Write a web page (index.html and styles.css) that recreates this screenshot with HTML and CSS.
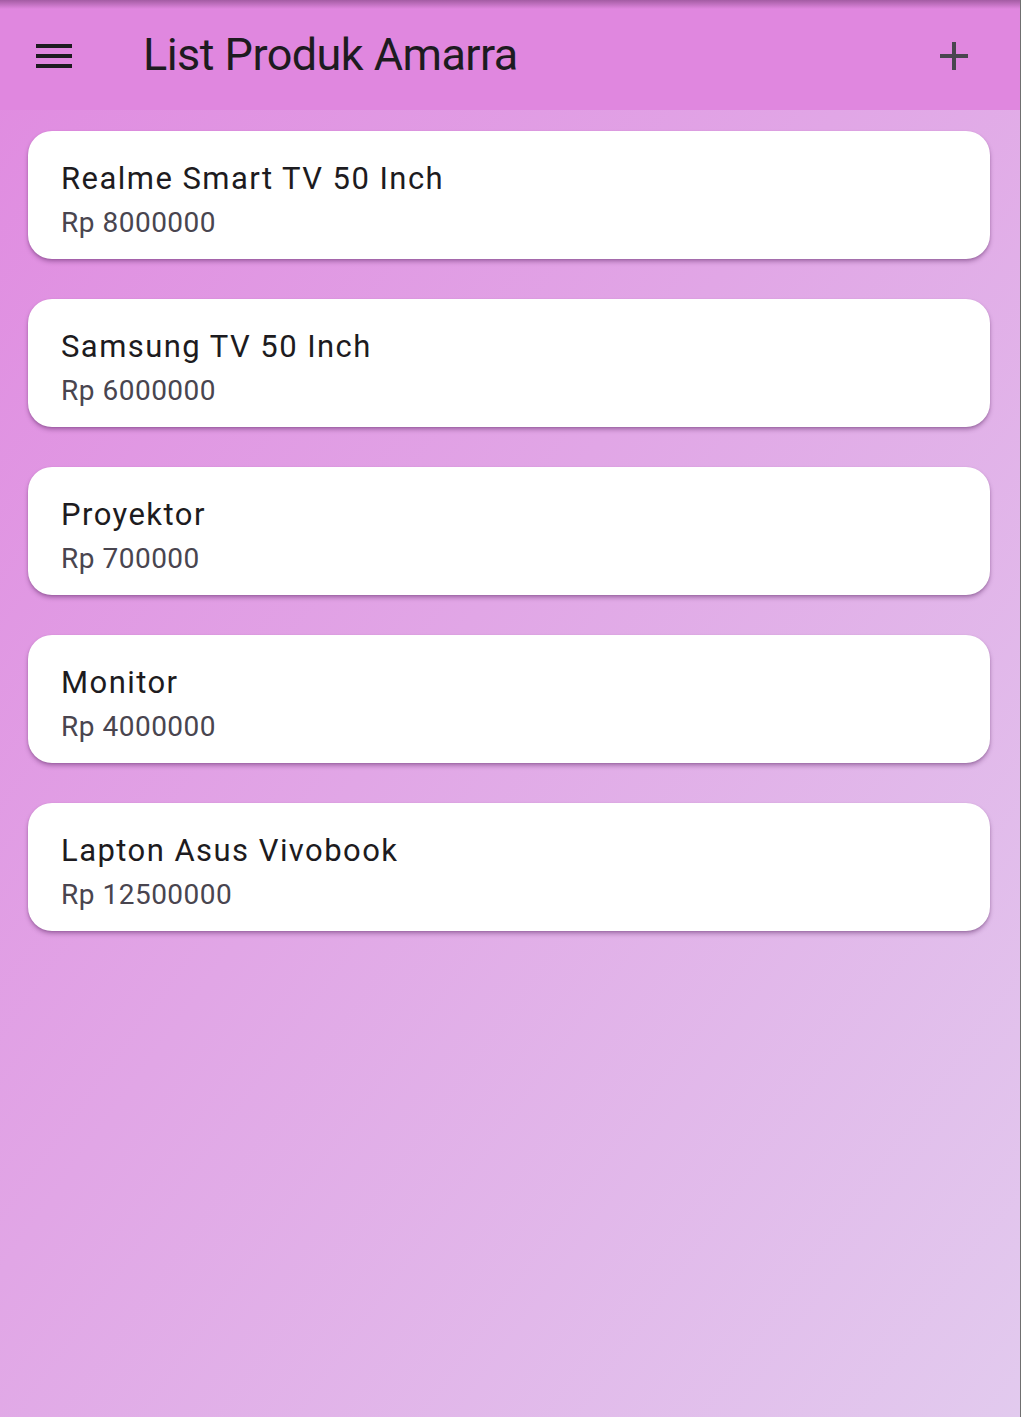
FILE: index.html
```html
<!DOCTYPE html>
<html lang="id">
<head>
<meta charset="utf-8">
<title>List Produk Amarra</title>
<link rel="stylesheet" href="styles.css">
</head>
<body>
<div class="screen">
  <header class="appbar">
    <button class="icon-btn menu" aria-label="menu">
      <svg viewBox="0 0 24 24" width="48" height="48"><path d="M3 18h18v-2H3v2zm0-5h18v-2H3v2zm0-7v2h18V6H3z" fill="currentColor"/></svg>
    </button>
    <h1 class="title">List Produk Amarra</h1>
    <button class="icon-btn add" aria-label="tambah">
      <svg viewBox="0 0 24 24" width="48" height="48"><path d="M19 13h-6v6h-2v-6H5v-2h6V5h2v6h6v2z" fill="currentColor"/></svg>
    </button>
  </header>
  <main class="list">
    <div class="card"><div class="name">Realme Smart TV 50 Inch</div><div class="price">Rp 8000000</div></div>
    <div class="card"><div class="name">Samsung TV 50 Inch</div><div class="price">Rp 6000000</div></div>
    <div class="card"><div class="name">Proyektor</div><div class="price">Rp 700000</div></div>
    <div class="card"><div class="name">Monitor</div><div class="price">Rp 4000000</div></div>
    <div class="card"><div class="name">Lapton Asus Vivobook</div><div class="price">Rp 12500000</div></div>
  </main>
</div>
</body>
</html>
```

FILE: styles.css
```css
html, body {
  margin: 0;
  padding: 0;
  height: 100%;
}
body {
  font-family: Roboto, "Noto Sans", sans-serif;
}
.screen {
  position: relative;
  height: 1417px;
  box-sizing: border-box;
  border-right: 1px solid #6f6f6f;
  background: linear-gradient(to bottom right, #e08ae0 0%, #e1a6e6 45%, #e2caee 100%);
  display: flex;
  flex-direction: column;
}
.screen::before {
  content: "";
  position: absolute;
  left: 0; right: 0; top: 0;
  height: 9px;
  background: linear-gradient(to bottom, rgba(90, 40, 90, 0.45), rgba(90, 40, 90, 0));
  pointer-events: none;
}
.appbar {
  height: 110px;
  flex: none;
  background: #e087df;
  display: flex;
  align-items: center;
  padding: 0 42px 0 30px;
  box-sizing: border-box;
}
.icon-btn {
  border: 0;
  background: none;
  padding: 0;
  width: 48px;
  height: 48px;
  display: flex;
  margin-top: 2px;
}
.menu { color: #1d1b20; }
.add { color: #49454f; }
.title {
  flex: 1;
  margin: 0 0 0 65px;
  font-size: 45px;
  font-weight: 400;
  letter-spacing: -0.55px;
  color: #1d1b20;
  line-height: 1;
  margin-bottom: 2px;
}
.list {
  padding: 21px 30px 0 28px;
  display: flex;
  flex-direction: column;
  gap: 40px;
}
.card {
  background: #fff;
  border-radius: 24px;
  height: 128px;
  box-sizing: border-box;
  padding: 25px 33px 0;
  box-shadow: 0 3px 4px rgba(80, 30, 90, 0.35), 0 1px 2px rgba(80, 30, 90, 0.2);
}
.name {
  font-size: 31px;
  line-height: 45px;
  letter-spacing: 1.45px;
  color: #1d1b20;
}
.price {
  font-size: 28px;
  line-height: 44px;
  letter-spacing: 0.5px;
  color: #49454f;
}
```
